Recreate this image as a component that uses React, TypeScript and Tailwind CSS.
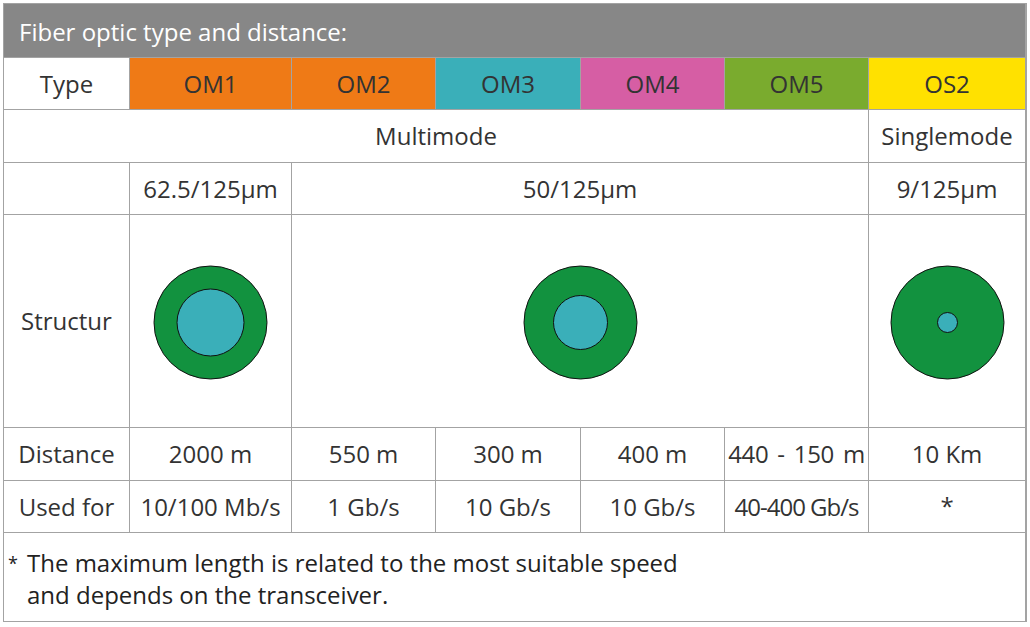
const font = { fontFamily: '"Open Sans", "Liberation Sans", sans-serif' }

function Cell({ className = "", children }: { className?: string; children?: React.ReactNode }) {
  return (
    <div className={`flex items-center justify-center bg-white text-[24px] text-[#333] ${className}`}>
      {children}
    </div>
  )
}

function Fiber({ outer, inner }: { outer: number; inner: number }) {
  return (
    <svg width={outer + 2} height={outer + 2} viewBox={`0 0 ${outer + 2} ${outer + 2}`}>
      <circle cx={outer / 2 + 1} cy={outer / 2 + 1} r={outer / 2} fill="#12923f" stroke="#111" strokeWidth="1" />
      <circle cx={outer / 2 + 1} cy={outer / 2 + 1} r={inner / 2} fill="#3aafb9" stroke="#111" strokeWidth="1" />
    </svg>
  )
}

export default function App() {
  return (
    <div className="min-h-screen bg-white pl-[3px] pt-[3px]" style={font}>
      <div
        className="grid w-[1024px] gap-px border border-[#a3a3a3] bg-[#a3a3a3]"
        style={{ gridTemplateColumns: "125px 161px 143px 144px 143px 143px 156px", gridTemplateRows: "53px 51px 52px 51px 212px 52px 51px 88px" }}
      >
        <div className="col-span-7 flex items-center bg-[#878787] pl-[15px] pt-[2px] text-[24px] text-white">
          Fiber optic type and distance:
        </div>

        <Cell>Type</Cell>
        <Cell className="bg-[#ef7a16]!">OM1</Cell>
        <Cell className="bg-[#ef7a16]!">OM2</Cell>
        <Cell className="bg-[#3aafb9]!">OM3</Cell>
        <Cell className="bg-[#d65ea4]!">OM4</Cell>
        <Cell className="bg-[#7aab2e]!">OM5</Cell>
        <Cell className="bg-[#ffe100]!">OS2</Cell>

        <Cell className="col-span-6">Multimode</Cell>
        <Cell>Singlemode</Cell>

        <Cell />
        <Cell>62.5/125µm</Cell>
        <Cell className="col-span-4">50/125µm</Cell>
        <Cell>9/125µm</Cell>

        <Cell>Structur</Cell>
        <Cell className="pt-[2px]">
          <Fiber outer={113} inner={67} />
        </Cell>
        <Cell className="col-span-4 pt-[2px]">
          <Fiber outer={113} inner={54} />
        </Cell>
        <Cell className="pt-[2px]">
          <Fiber outer={113} inner={20} />
        </Cell>

        <Cell>Distance</Cell>
        <Cell>2000 m</Cell>
        <Cell>550 m</Cell>
        <Cell>300 m</Cell>
        <Cell>400 m</Cell>
        <Cell className="whitespace-nowrap tracking-[-0.3px] [word-spacing:3px]">440 - 150 m</Cell>
        <Cell>10 Km</Cell>

        <Cell>Used for</Cell>
        <Cell className="whitespace-nowrap">10/100 Mb/s</Cell>
        <Cell>1 Gb/s</Cell>
        <Cell>10 Gb/s</Cell>
        <Cell>10 Gb/s</Cell>
        <Cell className="whitespace-nowrap tracking-[-1px]">40-400 Gb/s</Cell>
        <Cell className="pb-[2px] text-[18px]">*</Cell>

        <div className="col-span-7 bg-white pl-[4px] pt-[14px] text-[24px] leading-[32px] text-[#222]">
          <div className="flex">
            <span className="w-[19px] text-[18px]">*</span>
            <span>The maximum length is related to the most suitable speed</span>
          </div>
          <div className="pl-[19px]">and depends on the transceiver.</div>
        </div>
      </div>
    </div>
  )
}
